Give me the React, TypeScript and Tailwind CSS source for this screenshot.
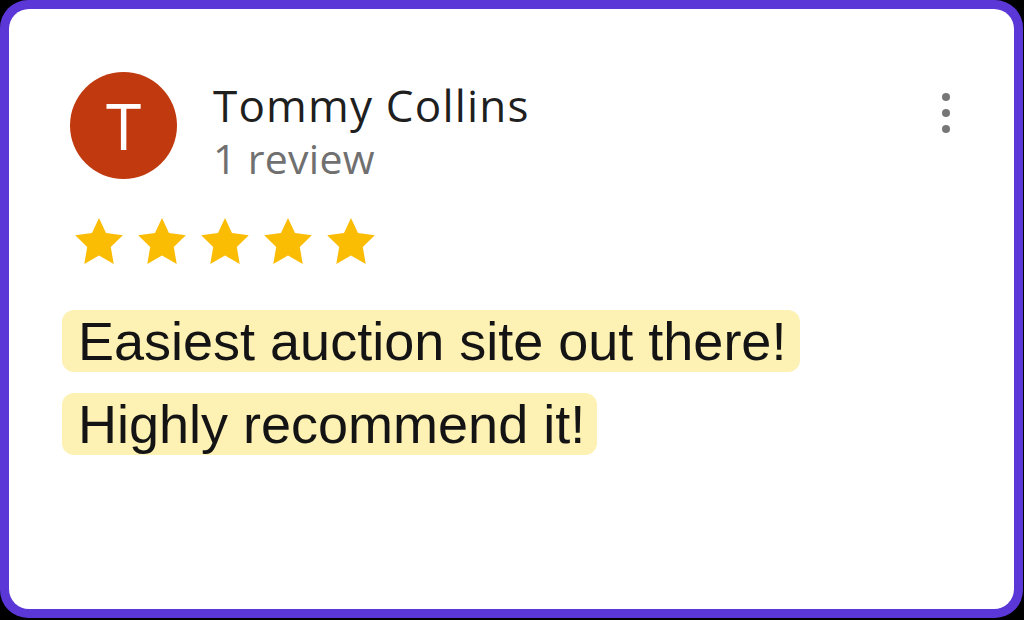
import React from 'react'

const Star = () => (
  <svg viewBox="2 2 20 19.3" className="w-[48px] h-[46px]" aria-hidden>
    <path
      d="M12 2l2.94 6.26L22 9.27l-5.05 4.87L18.18 21.3 12 17.77 5.82 21.3l1.23-7.16L2 9.27l7.06-1.01L12 2z"
      fill="#fbbc04"
    />
  </svg>
)

export default function App() {
  return (
    <div className="w-[1024px] h-[620px] bg-black pr-[1px] pb-[2px]">
      <div className="h-full rounded-[28px] bg-[#5a37d6] p-[9px]">
        <div className="h-full rounded-[20px] bg-white pl-[61px] pt-[63px] pr-[64px]">
          {/* Header */}
          <div className="flex items-start">
            <div className="w-[107px] h-[107px] shrink-0 rounded-full bg-[#c1390e] flex items-center justify-center text-white text-[64px] leading-none font-['Open_Sans',sans-serif]">
              T
            </div>
            <div className="ml-[36px] pt-[11px] font-['Open_Sans',sans-serif]">
              <div className="text-[44px] leading-[44px] tracking-[1.2px] text-[#1f1f1f]">Tommy Collins</div>
              <div className="mt-[11px] text-[41px] leading-[41px] tracking-[0.3px] text-[#707070]">1 review</div>
            </div>
            <button
              type="button"
              aria-label="More options"
              className="ml-auto mt-[21px] flex flex-col gap-[8px]"
            >
              <span className="block w-[8px] h-[8px] rounded-full bg-[#777]" />
              <span className="block w-[8px] h-[8px] rounded-full bg-[#777]" />
              <span className="block w-[8px] h-[8px] rounded-full bg-[#777]" />
            </button>
          </div>

          {/* Stars */}
          <div className="mt-[39px] ml-[5px] flex gap-[15px]">
            <Star />
            <Star />
            <Star />
            <Star />
            <Star />
          </div>

          {/* Review text */}
          <div className="mt-[46px] -ml-[8px] flex flex-col items-start gap-[21px] font-['Liberation_Sans',Arial,sans-serif] text-[54px] text-[#141414]">
            <span className="inline-block h-[62px] leading-[62px] pl-[16px] pr-[14px] rounded-[12px] bg-[#fdf1b4]">
              Easiest auction site out there!
            </span>
            <span className="inline-block h-[62px] leading-[62px] pl-[16px] pr-[12px] rounded-[12px] bg-[#fdf1b4]">
              Highly recommend it!
            </span>
          </div>
        </div>
      </div>
    </div>
  )
}
